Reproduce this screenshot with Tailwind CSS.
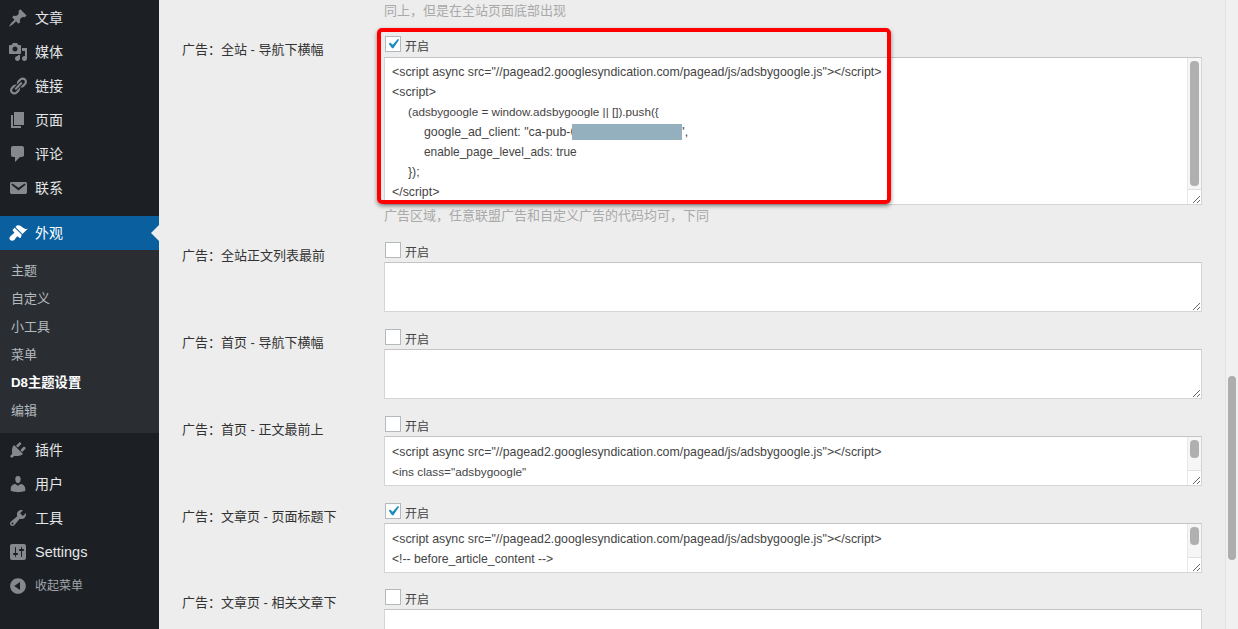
<!DOCTYPE html>
<html lang="zh">
<head>
<meta charset="utf-8">
<script src="https://cdn.jsdelivr.net/npm/@tailwindcss/browser@4"></script>
</head>
<body class="m-0 h-[629px] w-[1238px] overflow-hidden bg-[#ededed] font-['Liberation_Sans','Noto_Sans_CJK_SC',sans-serif] text-[13px] leading-5 text-[#444]">
<div class="relative flex h-[629px] overflow-hidden">

  <aside class="flex h-full w-[159px] shrink-0 flex-col bg-[#1c2024] pt-px text-[14px] text-[#e4e6e8]">
    <div class="flex h-[34px] shrink-0 items-center gap-[7px] pl-2"><svg class="size-5 shrink-0 fill-[#85898d]" viewBox="0 0 20 20"><path d="M10.44 3.02l1.82-1.82 6.36 6.35-1.83 1.82c-1.05-.68-2.48-.57-3.41.36l-.75.75c-.92.93-1.04 2.35-.35 3.41l-1.83 1.82-2.41-2.41-2.8 2.79c-.42.42-3.38 2.71-3.8 2.29s1.86-3.39 2.28-3.81l2.79-2.79L4.1 9.36l1.83-1.82c1.05.69 2.48.57 3.4-.36l.75-.75c.93-.92 1.05-2.35.36-3.41z"/></svg><span>文章</span></div>
    <div class="flex h-[34px] shrink-0 items-center gap-[7px] pl-2"><svg class="size-5 shrink-0 fill-[#85898d]" viewBox="0 0 20 20"><path d="M13 11V4c0-.55-.45-1-1-1h-1.67L9 1H5L3.67 3H2c-.55 0-1 .45-1 1v7c0 .55.45 1 1 1h10c.55 0 1-.45 1-1zM7 4.5c1.38 0 2.5 1.12 2.5 2.5S8.38 9.5 7 9.5 4.5 8.38 4.5 7 5.62 4.5 7 4.5zM14 6h5v10.5c0 1.38-1.12 2.5-2.5 2.5S14 17.88 14 16.5s1.12-2.5 2.5-2.5c.17 0 .34.02.5.05V9h-3V6zm-4 8.05V13h2v3.5c0 1.38-1.12 2.5-2.5 2.5S7 17.88 7 16.5 8.12 14 9.5 14c.17 0 .34.02.5.05z"/></svg><span>媒体</span></div>
    <div class="flex h-[34px] shrink-0 items-center gap-[7px] pl-2"><svg class="size-5 shrink-0 fill-[#85898d]" viewBox="0 0 20 20"><path d="M17.74 2.76c1.68 1.69 1.68 4.41 0 6.1l-1.53 1.52c-1.12 1.12-2.7 1.47-4.14 1.09l2.62-2.61.76-.77.76-.76c.84-.84.84-2.2 0-3.04-.84-.85-2.2-.85-3.04 0l-.77.76-3.38 3.38c-.37-1.44-.02-3.02 1.1-4.14l1.52-1.53c1.69-1.68 4.42-1.68 6.1 0zM8.59 13.43l5.34-5.34c.42-.42.42-1.1 0-1.52-.44-.43-1.13-.39-1.53 0l-5.33 5.34c-.42.42-.42 1.1 0 1.52.44.43 1.13.39 1.52 0zm-.76 2.29l4.14-4.15c.38 1.44.03 3.02-1.09 4.14l-1.52 1.53c-1.69 1.68-4.41 1.68-6.1 0-1.68-1.68-1.68-4.42 0-6.1l1.53-1.52c1.12-1.12 2.7-1.47 4.14-1.1l-4.14 4.15c-.85.84-.85 2.2 0 3.05.84.84 2.2.84 3.04 0z"/></svg><span>链接</span></div>
    <div class="flex h-[34px] shrink-0 items-center gap-[7px] pl-2"><svg class="size-5 shrink-0 fill-[#85898d]" viewBox="0 0 20 20"><path d="M6 15V2h10v13H6zm-1 1h8v2H3V5h2v11z"/></svg><span>页面</span></div>
    <div class="flex h-[34px] shrink-0 items-center gap-[7px] pl-2"><svg class="size-5 shrink-0 fill-[#85898d]" viewBox="0 0 20 20"><path d="M5 2h9c1.1 0 2 .9 2 2v7c0 1.1-.9 2-2 2h-2l-5 5v-5H5c-1.1 0-2-.9-2-2V4c0-1.1.9-2 2-2z"/></svg><span>评论</span></div>
    <div class="flex h-[34px] shrink-0 items-center gap-[7px] pl-2"><svg class="size-5 shrink-0 fill-[#85898d]" viewBox="0 0 20 20"><path d="M3.87 4h13.25C18.37 4 19 4.59 19 5.79v8.42c0 1.19-.63 1.79-1.88 1.79H3.87c-1.25 0-1.88-.6-1.88-1.79V5.79c0-1.2.63-1.79 1.88-1.79zm6.62 8.6l6.74-5.53c.24-.2.43-.66.13-1.07-.29-.41-.82-.42-1.17-.17l-5.7 3.86L4.8 5.83c-.35-.25-.88-.24-1.17.17-.3.41-.11.87.13 1.07z"/></svg><span>联系</span></div>

    <div class="relative mt-[11px] flex h-[34px] shrink-0 items-center gap-[7px] bg-[#0a5f9f] pl-2 text-white"><svg class="size-5 shrink-0 fill-white" viewBox="0 0 20 20"><path d="M14.48 11.06L7.41 3.99l1.5-1.5c.5-.56 2.3-.47 3.51.32 1.21.8 1.43 1.28 2.91 2.1 1.18.64 2.45 1.26 4.45.85zm-.71.71L6.7 4.7 4.93 6.47c-.39.39-.39 1.02 0 1.41l1.06 1.06c.39.39.39 1.03 0 1.42-.6.6-1.43 1.11-2.21 1.69-.35.26-.7.53-1.01.84C1.43 13.71.96 15.65 2.15 17c.01.01.01.01.02.01 1.34 1.19 3.28.72 4.1-.09.31-.31.58-.66.84-1.01.58-.78 1.09-1.61 1.69-2.21.39-.39 1.02-.39 1.41 0l1.06 1.06c.39.39 1.03.39 1.42 0z"/></svg><span>外观</span>
      <div class="absolute right-0 top-[9px] size-0 border-y-[8px] border-r-[8px] border-y-transparent border-r-[#ededed]"></div>
    </div>
    <div class="flex h-[183px] shrink-0 flex-col bg-[#2a2e33] pt-[7px] text-[13px] text-[#b4b9be]">
      <div class="flex h-7 items-center pl-[11px]">主题</div>
      <div class="flex h-7 items-center pl-[11px]">自定义</div>
      <div class="flex h-7 items-center pl-[11px]">小工具</div>
      <div class="flex h-7 items-center pl-[11px]">菜单</div>
      <div class="flex h-7 items-center pl-[11px] text-[13.3px] font-bold text-white">D8主题设置</div>
      <div class="flex h-7 items-center pl-[11px]">编辑</div>
    </div>
    <div class="flex h-[34px] shrink-0 items-center gap-[7px] pl-2"><svg class="size-5 shrink-0 fill-[#85898d]" viewBox="0 0 20 20"><path d="M13.11 4.36L9.87 7.6 8 5.73l3.24-3.24c.35-.34 1.05-.2 1.56.32.52.51.66 1.21.31 1.55zm-8 1.77l.91-1.12 9.01 9.01-1.19.84c-.71.71-2.63 1.16-3.82 1.16H6.14L4.9 17.26c-.59.59-1.54.59-2.12 0-.59-.58-.59-1.53 0-2.12l1.24-1.24v-3.88c0-1.13.4-3.19 1.09-3.89zm7.26 3.97l3.24-3.24c.34-.35 1.04-.21 1.55.31.52.51.66 1.21.31 1.55l-3.24 3.25z"/></svg><span>插件</span></div>
    <div class="flex h-[34px] shrink-0 items-center gap-[7px] pl-2"><svg class="size-5 shrink-0 fill-[#85898d]" viewBox="0 0 20 20"><path d="M10 9.25c-2.27 0-2.73-3.44-2.73-3.44C7 4.02 7.82 2 9.97 2c2.16 0 2.98 2.02 2.71 3.81 0 0-.41 3.44-2.68 3.44zm0 2.57L12.72 10c2.39 0 4.52 2.33 4.52 4.53v2.49s-3.65 1.13-7.24 1.13c-3.65 0-7.24-1.13-7.24-1.13v-2.49c0-2.25 1.94-4.48 4.47-4.48z"/></svg><span>用户</span></div>
    <div class="flex h-[34px] shrink-0 items-center gap-[7px] pl-2"><svg class="size-5 shrink-0 fill-[#85898d]" viewBox="0 0 20 20"><path d="M16.68 9.77c-1.34 1.34-3.3 1.67-4.95.99l-5.41 6.52c-.99.99-2.59.99-3.58 0s-.99-2.59 0-3.57l6.52-5.42c-.68-1.65-.35-3.61.99-4.95 1.28-1.28 3.12-1.62 4.72-1.06l-2.89 2.89 2.82 2.82 2.86-2.87c.53 1.58.18 3.39-1.08 4.65zM3.81 16.21c.4.39 1.04.39 1.43 0 .4-.4.4-1.04 0-1.43-.39-.4-1.03-.4-1.43 0-.39.39-.39 1.03 0 1.43z"/></svg><span>工具</span></div>
    <div class="flex h-[34px] shrink-0 items-center gap-[7px] pl-2"><svg class="size-5 shrink-0 fill-[#85898d]" viewBox="0 0 20 20"><path fill-rule="evenodd" d="M18 16V4c0-1.1-.9-2-2-2H4c-1.1 0-2 .9-2 2v12c0 1.1.9 2 2 2h12c1.1 0 2-.9 2-2zM8 11h1c.55 0 1 .45 1 1s-.45 1-1 1H8v1.5c0 .28-.22.5-.5.5s-.5-.22-.5-.5V13H6c-.55 0-1-.45-1-1s.45-1 1-1h1V5.5c0-.28.22-.5.5-.5s.5.22.5.5V11zm5-2h-1c-.55 0-1-.45-1-1s.45-1 1-1h1V5.5c0-.28.22-.5.5-.5s.5.22.5.5V7h1c.55 0 1 .45 1 1s-.45 1-1 1h-1v5.5c0 .28-.22.5-.5.5s-.5-.22-.5-.5V9z"/></svg><span class="text-[14.5px]">Settings</span></div>
    <div class="flex h-[33px] shrink-0 items-center gap-[7px] pl-2 text-[12px] text-[#a0a5aa]"><svg class="size-5 shrink-0 fill-[#85898d]" viewBox="0 0 20 20"><path d="M10 2.16c4.33 0 7.84 3.51 7.84 7.84s-3.51 7.84-7.84 7.84S2.16 14.33 2.16 10 5.71 2.16 10 2.16zm2 11.72V6.12L6.18 9.97z"/></svg><span>收起菜单</span></div>
  </aside>

  <main class="min-w-0 flex-1 px-[23px]">
    <div class="ml-[202px] h-[37px] pt-px text-[#a9a9a9]">同上，但是在全站页面底部出现</div>

    <section class="flex">
      <div class="w-[202px] shrink-0 pt-[3px] text-[#333]">广告：全站 - 导航下横幅</div>
      <div class="min-w-0 flex-1">
        <label class="flex h-5 items-start gap-[4px] pl-px text-[12px]"><span class="-mt-px flex size-4 shrink-0 items-center justify-center border border-[#b4b9be] bg-white"><svg class="size-5 shrink-0 fill-[#1e8cbe]" viewBox="0 0 20 20"><path d="M14.83 4.89l1.34.94-5.81 8.38H9.02L5.78 9.67l1.34-1.25 2.57 2.4z"/></svg></span><span>开启</span></label>
        <div class="relative h-[148px] overflow-hidden border border-[#d5d5d5] border-t-[#c4c4c4] bg-white pb-[2px] pt-[4px] pl-[7px] text-[12.35px] whitespace-nowrap">
          <div>&lt;script async src="//pagead2.googlesyndication.com/pagead/js/adsbygoogle.js"&gt;&lt;/script&gt;</div>
          <div>&lt;script&gt;</div>
          <div class="pl-4 text-[11.7px]">(adsbygoogle = window.adsbygoogle || []).push({</div>
          <div class="flex pl-8"><span>google_ad_client: "ca-pub-6</span><span class="relative top-[2px] -ml-[5px] -mr-[2px] h-4 w-[110px] shrink-0 bg-[#94b0be]"></span><span>",</span></div>
          <div class="pl-8 text-[11.9px]">enable_page_level_ads: true</div>
          <div class="pl-4">});</div>
          <div>&lt;/script&gt;</div>
          <div class="absolute inset-y-0 right-0 flex w-[14px] flex-col border-l border-[#e8e8e8]">
            <div class="flex-1 bg-[#f6f6f6] px-[2px] py-[3px]"><div class="h-full rounded bg-[#b0b0b0]"></div></div>
            <div class="relative h-[15px] border-t border-[#e0e0e0] bg-white"><svg class="absolute bottom-0 right-0 size-[9px] stroke-[#666]" viewBox="0 0 9 9"><path d="M1 8L8 1M5 8L8 5"/></svg></div>
          </div>
        </div>
        <div class="h-[38px] pt-px text-[#a9a9a9]">广告区域，任意联盟广告和自定义广告的代码均可，下同</div>
      </div>
    </section>

    <section class="flex">
      <div class="w-[202px] shrink-0 pt-[3px] text-[#333]">广告：全站正文列表最前</div>
      <div class="min-w-0 flex-1">
        <label class="flex h-[19px] items-start gap-[4px] pl-px text-[12px]"><span class="-mt-px size-4 shrink-0 border border-[#b4b9be] bg-white"></span><span>开启</span></label>
        <div class="relative h-[50px] border border-[#d5d5d5] border-t-[#c4c4c4] bg-white"><svg class="absolute bottom-0 right-0 size-[9px] stroke-[#666]" viewBox="0 0 9 9"><path d="M1 8L8 1M5 8L8 5"/></svg></div>
      </div>
    </section>

    <section class="mt-[18px] flex">
      <div class="w-[202px] shrink-0 pt-[3px] text-[#333]">广告：首页 - 导航下横幅</div>
      <div class="min-w-0 flex-1">
        <label class="flex h-[19px] items-start gap-[4px] pl-px text-[12px]"><span class="-mt-px size-4 shrink-0 border border-[#b4b9be] bg-white"></span><span>开启</span></label>
        <div class="relative h-[50px] border border-[#d5d5d5] border-t-[#c4c4c4] bg-white"><svg class="absolute bottom-0 right-0 size-[9px] stroke-[#666]" viewBox="0 0 9 9"><path d="M1 8L8 1M5 8L8 5"/></svg></div>
      </div>
    </section>

    <section class="mt-[17.75px] flex">
      <div class="w-[202px] shrink-0 pt-[3px] text-[#333]">广告：首页 - 正文最前上</div>
      <div class="min-w-0 flex-1">
        <label class="flex h-[19px] items-start gap-[4px] pl-px text-[12px]"><span class="-mt-px size-4 shrink-0 border border-[#b4b9be] bg-white"></span><span>开启</span></label>
        <div class="relative h-[50px] overflow-hidden border border-[#d5d5d5] border-t-[#c4c4c4] bg-white pt-[5px] pl-[7px] text-[12.35px] whitespace-nowrap">
          <div>&lt;script async src="//pagead2.googlesyndication.com/pagead/js/adsbygoogle.js"&gt;&lt;/script&gt;</div>
          <div class="text-[11.8px]">&lt;ins class="adsbygoogle"</div>
          <div class="absolute inset-y-0 right-0 flex w-[14px] flex-col border-l border-[#e8e8e8]">
            <div class="flex-1 bg-[#f6f6f6] px-[2px] pt-[3px]"><div class="h-[18px] rounded bg-[#b0b0b0]"></div></div>
            <div class="relative h-[15px] border-t border-[#e0e0e0] bg-white"><svg class="absolute bottom-0 right-0 size-[9px] stroke-[#666]" viewBox="0 0 9 9"><path d="M1 8L8 1M5 8L8 5"/></svg></div>
          </div>
        </div>
      </div>
    </section>

    <section class="mt-[17.75px] flex">
      <div class="w-[202px] shrink-0 pt-[3px] text-[#333]">广告：文章页 - 页面标题下</div>
      <div class="min-w-0 flex-1">
        <label class="flex h-[19px] items-start gap-[4px] pl-px text-[12px]"><span class="-mt-px flex size-4 shrink-0 items-center justify-center border border-[#b4b9be] bg-white"><svg class="size-5 shrink-0 fill-[#1e8cbe]" viewBox="0 0 20 20"><path d="M14.83 4.89l1.34.94-5.81 8.38H9.02L5.78 9.67l1.34-1.25 2.57 2.4z"/></svg></span><span>开启</span></label>
        <div class="relative h-[50px] overflow-hidden border border-[#d5d5d5] border-t-[#c4c4c4] bg-white pt-[5px] pl-[7px] text-[12.35px] whitespace-nowrap">
          <div>&lt;script async src="//pagead2.googlesyndication.com/pagead/js/adsbygoogle.js"&gt;&lt;/script&gt;</div>
          <div class="text-[12.2px]">&lt;!-- before_article_content --&gt;</div>
          <div class="absolute inset-y-0 right-0 flex w-[14px] flex-col border-l border-[#e8e8e8]">
            <div class="flex-1 bg-[#f6f6f6] px-[2px] pt-[3px]"><div class="h-[18px] rounded bg-[#b0b0b0]"></div></div>
            <div class="relative h-[15px] border-t border-[#e0e0e0] bg-white"><svg class="absolute bottom-0 right-0 size-[9px] stroke-[#666]" viewBox="0 0 9 9"><path d="M1 8L8 1M5 8L8 5"/></svg></div>
          </div>
        </div>
      </div>
    </section>

    <section class="mt-[17.75px] flex">
      <div class="w-[202px] shrink-0 pt-[3px] text-[#333]">广告：文章页 - 相关文章下</div>
      <div class="min-w-0 flex-1">
        <label class="flex h-[19px] items-start gap-[4px] pl-px text-[12px]"><span class="-mt-px size-4 shrink-0 border border-[#b4b9be] bg-white"></span><span>开启</span></label>
        <div class="h-[50px] border border-[#d5d5d5] border-t-[#c4c4c4] bg-white"></div>
      </div>
    </section>
  </main>

  <div class="w-[13px] shrink-0 border-l border-[#e4e4e4] bg-[#f0f0f0] px-[2px] pt-[376px]"><div class="h-[184px] rounded bg-[#adadad]"></div></div>

  <div class="pointer-events-none absolute left-[377px] top-[28px] h-[176px] w-[514px] rounded-[5px] border-[4px] border-[#fe0000] shadow-[0_2px_4px_rgba(0,0,0,0.45)]"></div>
</div>
</body>
</html>
